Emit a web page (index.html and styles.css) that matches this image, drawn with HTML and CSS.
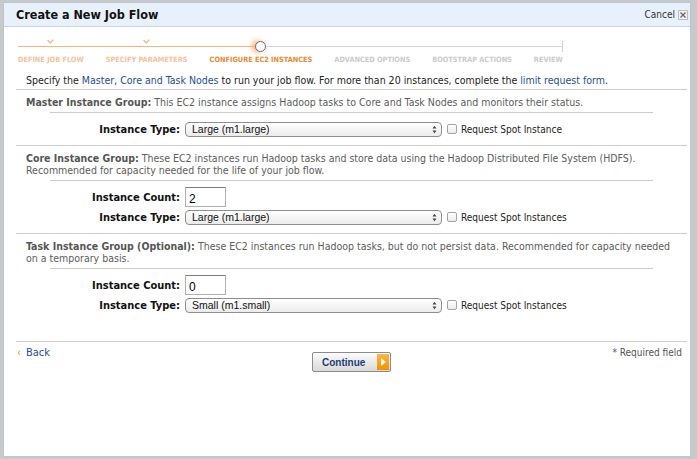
FILE: index.html
```html
<!DOCTYPE html>
<html lang="en">
<head>
    <meta charset="UTF-8">
    <title>Create a New Job Flow</title>
    <link rel="stylesheet" href="styles.css">
</head>
<body>
    <div class="dialog">
        <div class="dialog-head">
            <h1>Create a New Job Flow</h1>
            <a class="cancel" href="#">Cancel
                <span class="close-box">
                    <svg width="6" height="6" viewBox="0 0 6 6"><path d="M0.5 0.5L5.5 5.5M5.5 0.5L0.5 5.5" stroke="#666" stroke-width="1.2"/></svg>
                </span>
            </a>
        </div>

        <div class="dialog-body">
            <div class="steps">
                <div class="step done">
                    <span class="step-mark"><svg width="7" height="5" viewBox="0 0 7 5"><path d="M0.6 1.2L3.3 3.8L6.4 0.6" fill="none" stroke="#f3b27a" stroke-width="1.2"/></svg></span>
                    <span class="step-label">DEFINE JOB FLOW</span>
                </div>
                <div class="step done">
                    <span class="step-mark"><svg width="7" height="5" viewBox="0 0 7 5"><path d="M0.6 1.2L3.3 3.8L6.4 0.6" fill="none" stroke="#f3b27a" stroke-width="1.2"/></svg></span>
                    <span class="step-label">SPECIFY PARAMETERS</span>
                </div>
                <div class="step current">
                    <span class="step-mark"><span class="dot"></span></span>
                    <span class="step-label">CONFIGURE EC2 INSTANCES</span>
                </div>
                <div class="step">
                    <span class="step-mark"></span>
                    <span class="step-label">ADVANCED OPTIONS</span>
                </div>
                <div class="step">
                    <span class="step-mark"></span>
                    <span class="step-label">BOOTSTRAP ACTIONS</span>
                </div>
                <div class="step">
                    <span class="step-mark"></span>
                    <span class="step-label">REVIEW</span>
                </div>
            </div>

            <p class="intro">Specify the <a href="#">Master</a>, <a href="#">Core and Task Nodes</a> to run your job flow. For more than 20 instances, complete the <a href="#">limit request form</a>.</p>

            <div class="group">
                <p class="group-desc"><b>Master Instance Group:</b> This EC2 instance assigns Hadoop tasks to Core and Task Nodes and monitors their status.</p>
                <div class="fields">
                    <div class="field">
                        <span class="field-label">Instance Type:</span>
                        <div class="select"><span>Large (m1.large)</span><svg width="5" height="9" viewBox="0 0 5 9"><path d="M0.5 3.5L2.5 0.8L4.5 3.5ZM0.5 5.5L2.5 8.2L4.5 5.5Z" fill="#444"/></svg></div>
                        <label class="spot"><span class="check"></span>Request Spot Instance</label>
                    </div>
                </div>
            </div>

            <div class="group">
                <p class="group-desc"><b>Core Instance Group:</b> These EC2 instances run Hadoop tasks and store data using the Hadoop Distributed File System (HDFS).<br>Recommended for capacity needed for the life of your job flow.</p>
                <div class="fields">
                    <div class="field">
                        <span class="field-label">Instance Count:</span>
                        <input class="count" type="text" value="2">
                    </div>
                    <div class="field">
                        <span class="field-label">Instance Type:</span>
                        <div class="select"><span>Large (m1.large)</span><svg width="5" height="9" viewBox="0 0 5 9"><path d="M0.5 3.5L2.5 0.8L4.5 3.5ZM0.5 5.5L2.5 8.2L4.5 5.5Z" fill="#444"/></svg></div>
                        <label class="spot"><span class="check"></span>Request Spot Instances</label>
                    </div>
                </div>
            </div>

            <div class="group">
                <p class="group-desc"><b>Task Instance Group (Optional):</b> These EC2 instances run Hadoop tasks, but do not persist data. Recommended for capacity needed<br>on a temporary basis.</p>
                <div class="fields">
                    <div class="field">
                        <span class="field-label">Instance Count:</span>
                        <input class="count" type="text" value="0">
                    </div>
                    <div class="field">
                        <span class="field-label">Instance Type:</span>
                        <div class="select"><span>Small (m1.small)</span><svg width="5" height="9" viewBox="0 0 5 9"><path d="M0.5 3.5L2.5 0.8L4.5 3.5ZM0.5 5.5L2.5 8.2L4.5 5.5Z" fill="#444"/></svg></div>
                        <label class="spot"><span class="check"></span>Request Spot Instances</label>
                    </div>
                </div>
            </div>

            <div class="dialog-foot">
                <a class="back" href="#"><span class="back-arrow">&lsaquo;</span>Back</a>
                <button class="continue">Continue <span class="go"></span></button>
                <span class="required">* Required field</span>
            </div>
        </div>
    </div>
</body>
</html>
```

FILE: styles.css
```css
body {
    margin: 0;
    padding: 2px 0 0 3px;
    background-color: #c9c9c9;
    font-family: "DejaVu Sans", Verdana, sans-serif;
    font-stretch: condensed;
    font-size: 10.5px;
    color: #222;
}
a {
    color: #1f4e96;
    text-decoration: none;
}
p {
    margin: 0;
}
.dialog {
    width: 686px;
    height: 453px;
    background-color: #ffffff;
    border: 1px solid #b6c7da;
}
.dialog-head {
    display: flex;
    align-items: center;
    justify-content: space-between;
    height: 23px;
    padding: 0 2px 0 12px;
    background-color: #e8f1fb;
    border-bottom: 1px solid #c7d6e8;
}
.dialog-head h1 {
    margin: 0;
    font-size: 12.5px;
    font-weight: bold;
    color: #111;
}
.cancel {
    display: flex;
    align-items: center;
    gap: 3px;
    color: #333;
    font-size: 10px;
}
.close-box {
    display: flex;
    align-items: center;
    justify-content: center;
    width: 8px;
    height: 8px;
    border: 1px solid #bdbdbd;
    background-color: #f1f1f1;
}
.dialog-body {
    padding: 0 3px 0 12px;
}
.steps {
    display: flex;
    gap: 22px;
    width: fit-content;
    margin: 12px 0 0 2px;
    background:
        linear-gradient(#cfcfcf, #cfcfcf) right 2px / 1px 11px no-repeat,
        linear-gradient(#f6b57c, #f6b57c) 0 7px / 240px 1px no-repeat,
        linear-gradient(#d4d4d4, #d4d4d4) 0 7px / 100% 1px no-repeat;
}
.step {
    display: flex;
    flex-direction: column;
    align-items: center;
}
.step-mark {
    display: flex;
    align-items: flex-start;
    justify-content: center;
    height: 14px;
}
.step.current .step-mark {
    align-items: center;
}
.dot {
    width: 9px;
    height: 9px;
    border: 1px solid #6a6a6a;
    border-radius: 50%;
    background-color: #fff;
    box-shadow: -3px 0 4px 1px rgba(246, 170, 100, 0.7);
}
.step-label {
    margin-top: 2px;
    font-size: 7.3px;
    font-weight: bold;
    line-height: 9px;
    white-space: nowrap;
    color: #cbcbcb;
}
.step.done .step-label {
    color: #f4c29a;
}
.step.current .step-label {
    color: #e98a35;
}
.intro {
    margin: 10px 0 3px;
    padding-left: 10px;
    line-height: 12px;
}
.group {
    border-top: 1px solid #cccccc;
    padding: 6px 0;
}
.group-desc {
    padding: 0 10px;
    line-height: 12px;
    color: #5c5c5c;
}
.group-desc b {
    color: #555;
}
.fields {
    margin: 4px 34px 0;
    padding-top: 6px;
    border-top: 1px solid #cccccc;
}
.field {
    display: grid;
    grid-template-columns: 130px auto auto;
    justify-content: start;
    align-items: center;
    column-gap: 5px;
    height: 20px;
}
.field-label {
    text-align: right;
    font-size: 11px;
    font-weight: bold;
    color: #111;
}
.select {
    display: flex;
    align-items: center;
    justify-content: space-between;
    box-sizing: border-box;
    width: 257px;
    height: 15px;
    padding: 0 4px 0 6px;
    border: 1px solid #8e8e8e;
    border-radius: 4px;
    background: linear-gradient(#ffffff, #ebebeb);
    font-family: "Liberation Sans", Arial, sans-serif;
    font-size: 10.5px;
    font-stretch: normal;
    color: #111;
}
.spot {
    display: flex;
    align-items: center;
    gap: 4px;
    font-size: 10px;
    color: #222;
}
.check {
    width: 8px;
    height: 8px;
    border: 1px solid #a4a4a4;
    border-radius: 2px;
    background: linear-gradient(#ffffff, #ececec);
}
.count {
    box-sizing: border-box;
    width: 41px;
    height: 20px;
    margin: 0;
    padding: 3px 3px 0;
    border: 1px solid #b0b0b0;
    border-top-color: #7c7c7c;
    font-family: "Liberation Sans", Arial, sans-serif;
    font-size: 12px;
    color: #000;
}
.dialog-foot {
    display: grid;
    grid-template-columns: 1fr auto 1fr;
    align-items: start;
    margin-top: 20px;
    padding-top: 5px;
    border-top: 1px solid #cccccc;
    line-height: 12px;
}
.back {
    justify-self: start;
    font-size: 11px;
    padding-left: 1px;
}
.back-arrow {
    margin-right: 5px;
    color: #f08a24;
}
.continue {
    display: flex;
    align-items: center;
    gap: 12px;
    box-sizing: border-box;
    width: 79px;
    height: 20px;
    margin-top: 5px;
    padding: 0 1px 0 9px;
    border: 1px solid #8c8c8c;
    border-radius: 2px;
    background: linear-gradient(#fcfcfc, #d8d8d8);
    font-family: "Liberation Sans", Arial, sans-serif;
    font-size: 10px;
    font-weight: bold;
    color: #1b3c73;
}
.go {
    display: flex;
    align-items: center;
    justify-content: center;
    width: 13px;
    height: 16px;
    background: linear-gradient(#fdb54a, #f39200);
}
.go::after {
    content: "";
    border-left: 5px solid #fff6d8;
    border-top: 4px solid transparent;
    border-bottom: 4px solid transparent;
}
.required {
    justify-self: end;
    margin-right: 5px;
    font-size: 10px;
    color: #555;
}
```
